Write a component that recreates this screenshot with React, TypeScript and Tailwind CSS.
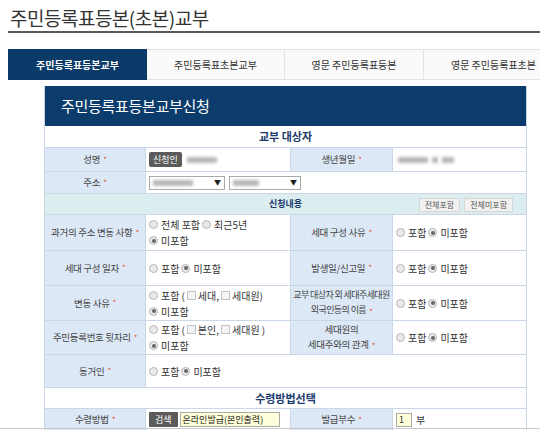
import React from "react";

const Star = () => <span className="text-[#e0502a] text-[8px] ml-[3px] align-middle">*</span>;

const Radio = ({ checked, label }: { checked?: boolean; label: string }) => (
  <span className="inline-flex items-center mr-[2px]">
    <span className="w-[9px] h-[9px] rounded-full border border-[#b5b5b5] bg-[#e9e9e9] flex items-center justify-center mr-[3px]">
      {checked && <span className="w-[4px] h-[4px] rounded-full bg-[#666]" />}
    </span>
    <span>{label}</span>
  </span>
);

const Check = () => (
  <span className="inline-block w-[9px] h-[9px] border border-[#c4c4c4] bg-[#f4f4f4] mx-[2px] align-middle" />
);

const Blur = ({ w }: { w: number }) => (
  <span
    className="inline-block h-[6px] bg-[#b8b8b8] blur-[1.5px] rounded-[1px]"
    style={{ width: w }}
  />
);

const Label = ({ children, h, two }: { children: React.ReactNode; h: number; two?: boolean }) => (
  <div
    className={`bg-[#dce8f6] border-r border-[#c9d7e6] flex items-center justify-center text-center text-[9.5px] tracking-[-0.3px] whitespace-nowrap text-[#444] ${two ? "leading-[15px]" : ""}`}
    style={{ height: h }}
  >
    {children}
  </div>
);

const Value = ({ children, h, span3 }: { children: React.ReactNode; h: number; span3?: boolean }) => (
  <div
    className={`bg-white flex flex-col justify-center pl-[3px] text-[10px] text-[#333] border-r border-[#c9d7e6] ${span3 ? "col-span-3" : ""}`}
    style={{ height: h }}
  >
    {children}
  </div>
);

const RadioPair = () => (
  <div className="flex items-center">
    <Radio label="포함" />
    <Radio checked label="미포함" />
  </div>
);

export default function App() {
  return (
    <div className="w-[540px] h-[433px] bg-white overflow-hidden relative font-['Noto_Sans_CJK_KR','Noto_Sans',sans-serif] text-[#333]">
      <div className="pl-[10px] pt-[4px] h-[31px] text-[19px] leading-[28px] text-[#333] tracking-[-0.5px]">
        주민등록표등본(초본)교부
      </div>
      <div className="ml-[8px] h-[2px] bg-[#5a5a5a]" />
      <div className="ml-[8px] mt-[16px] flex h-[31px]">
        <div className="w-[139px] shrink-0 bg-[#0d3b69] text-white text-[10px] font-bold flex items-center justify-center">
          주민등록표등본교부
        </div>
        <div className="w-[138px] shrink-0 bg-[#fafafa] border-t border-b border-r border-[#e3e3e3] text-[10px] flex items-center justify-center">
          주민등록표초본교부
        </div>
        <div className="w-[139px] shrink-0 bg-[#fafafa] border-t border-b border-r border-[#e3e3e3] text-[10px] flex items-center justify-center">
          영문 주민등록표등본
        </div>
        <div className="w-[139px] shrink-0 bg-[#fafafa] border-t border-b border-[#e3e3e3] text-[10px] flex items-center justify-center">
          영문 주민등록표초본
        </div>
      </div>

      <div className="ml-[44px] mt-[6px] w-[483px] border-l border-r border-[#c9d7e6]">
        <div className="h-[40px] bg-[#0c3c6c] text-white text-[15px] flex items-center pl-[16px] tracking-[-0.3px]">
          주민등록표등본교부신청
        </div>
        <div className="h-[22px] bg-white border-b border-[#c9d7e6] flex items-center justify-center text-[11px] font-bold text-[#1d3c6e]">
          교부 대상자
        </div>
        <div className="grid grid-cols-[101px_145px_102px_134px]">
          <Label h={23}>성명<Star /></Label>
          <Value h={23}>
            <div className="flex items-center">
              <span className="bg-[#5b5b5b] text-white text-[9px] px-[4px] h-[15px] leading-[15px] rounded-[2px] mr-[5px]">신청인</span>
              <Blur w={30} />
            </div>
          </Value>
          <Label h={23}>생년월일<Star /></Label>
          <Value h={23}>
            <div className="flex items-center gap-[4px] pl-[2px]">
              <Blur w={30} />
              <Blur w={6} />
              <Blur w={12} />
            </div>
          </Value>
          <div className="col-span-4 h-px bg-[#c9d7e6]" />
          <Label h={21}>주소<Star /></Label>
          <Value h={21} span3>
            <div className="flex items-center gap-[4px]">
              <div className="w-[76px] h-[14px] border border-[#aaa] bg-white flex items-center justify-between px-[3px]">
                <Blur w={40} />
                <span className="text-[7px] text-[#222]">▼</span>
              </div>
              <div className="w-[72px] h-[14px] border border-[#aaa] bg-white flex items-center justify-between px-[3px]">
                <Blur w={26} />
                <span className="text-[7px] text-[#222]">▼</span>
              </div>
            </div>
          </Value>
        </div>
        <div className="h-[22px] bg-[#dcedf0] border-t border-b border-[#c9d7e6] relative flex items-center justify-center text-[9px] font-bold text-[#1d3c6e]">
          신청내용
          <div className="absolute right-[13px] top-[4px] flex gap-[4px]">
            <span className="h-[14px] px-[5px] bg-[#f1f1f1] border border-[#d6d6d6] text-[8px] font-normal text-[#555] leading-[12px]">전체포함</span>
            <span className="h-[14px] px-[5px] bg-[#f1f1f1] border border-[#d6d6d6] text-[8px] font-normal text-[#555] leading-[12px]">전체미포함</span>
          </div>
        </div>
        <div className="grid grid-cols-[101px_145px_102px_134px]">
          <Label h={35}>과거의 주소 변동 사항<Star /></Label>
          <Value h={35}>
            <div className="flex items-center">
              <Radio label="전체 포함" />
              <Radio label="최근5년" />
            </div>
            <div className="flex items-center mt-[1px]">
              <Radio checked label="미포함" />
            </div>
          </Value>
          <Label h={35}>세대 구성 사유<Star /></Label>
          <Value h={35}><RadioPair /></Value>
          <div className="col-span-4 h-px bg-[#c9d7e6]" />

          <Label h={34}>세대 구성 일자<Star /></Label>
          <Value h={34}><RadioPair /></Value>
          <Label h={34}>발생일/신고일<Star /></Label>
          <Value h={34}><RadioPair /></Value>
          <div className="col-span-4 h-px bg-[#c9d7e6]" />

          <Label h={34}>변동 사유<Star /></Label>
          <Value h={34}>
            <div className="flex items-center">
              <Radio label="포함" />
              <span>(</span><Check /><span>세대,</span><Check /><span>세대원)</span>
            </div>
            <div className="flex items-center mt-[1px]">
              <Radio checked label="미포함" />
            </div>
          </Value>
          <Label h={34} two>
            <span className="text-[9px] tracking-[-0.6px]">교부 대상자 외 세대주세대원<br />외국인등의 이름<Star /></span>
          </Label>
          <Value h={34}><RadioPair /></Value>
          <div className="col-span-4 h-px bg-[#c9d7e6]" />

          <Label h={33}>주민등록번호 뒷자리<Star /></Label>
          <Value h={33}>
            <div className="flex items-center">
              <Radio label="포함" />
              <span>(</span><Check /><span>본인,</span><Check /><span>세대원 )</span>
            </div>
            <div className="flex items-center mt-[1px]">
              <Radio checked label="미포함" />
            </div>
          </Value>
          <Label h={33} two>
            <span>세대원의<br />세대주와의 관계<Star /></span>
          </Label>
          <Value h={33}><RadioPair /></Value>
          <div className="col-span-4 h-px bg-[#c9d7e6]" />

          <Label h={32}>동거인<Star /></Label>
          <Value h={32} span3><RadioPair /></Value>
          <div className="col-span-4 h-px bg-[#c9d7e6]" />
        </div>
        <div className="h-[21px] bg-white border-b border-[#c9d7e6] flex items-center justify-center text-[11px] font-bold text-[#1d3c6e]">
          수령방법선택
        </div>
        <div className="grid grid-cols-[101px_145px_102px_134px]">
          <Label h={21}>수령방법<Star /></Label>
          <Value h={21}>
            <div className="flex items-center">
              <span className="bg-[#5b5b5b] text-white text-[9px] px-[6px] h-[15px] leading-[15px] rounded-[1px] mr-[2px]">검색</span>
              <span className="w-[100px] h-[15px] bg-[#ffffd9] border border-[#aaa] text-[9px] leading-[13px] pl-[2px] text-[#222]">온라인발급(본인출력)</span>
            </div>
          </Value>
          <Label h={21}>발급부수<Star /></Label>
          <Value h={21}>
            <div className="flex items-center">
              <span className="w-[16px] h-[14px] bg-[#ffffd9] border border-[#aaa] text-[9px] leading-[12px] pl-[2px] mr-[4px]">1</span>
              <span>부</span>
            </div>
          </Value>
        </div>
      </div>
      <div className="absolute left-0 right-0 top-[428px] h-px bg-[#c8c8c8]" />
    </div>
  );
}
